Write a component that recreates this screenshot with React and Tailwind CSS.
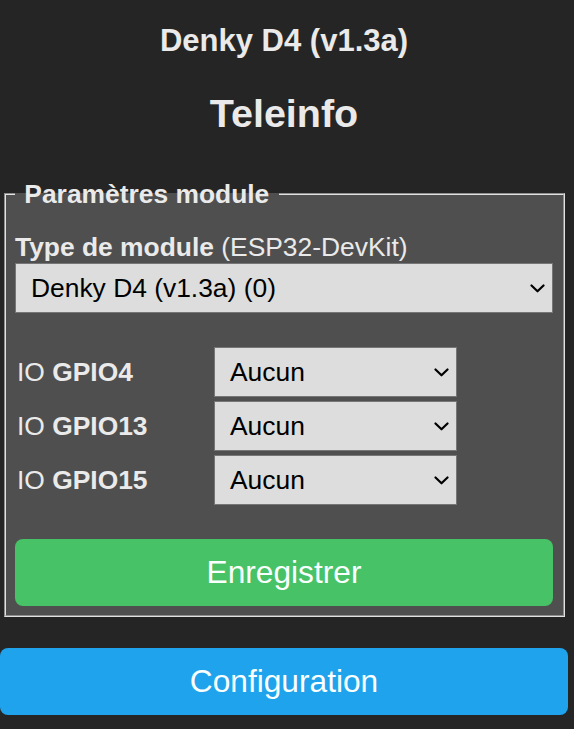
import React from "react";

function Chevron() {
  return (
    <svg width="15" height="9" viewBox="0 0 15 9" className="shrink-0">
      <polyline points="1.5,1.5 7.5,7.3 13.5,1.5" fill="none" stroke="#000" strokeWidth="2.2" strokeLinecap="round" strokeLinejoin="round" />
    </svg>
  );
}

function FakeSelect({ value, className = "" }) {
  return (
    <div className={"flex h-[50px] items-center justify-between border border-[#767676] bg-[#dddddd] pl-[15px] pr-[7px] text-[26.4px] leading-[30px] text-black " + className}>
      <span>{value}</span>
      <Chevron />
    </div>
  );
}

export default function App() {
  const gpios = ["GPIO4", "GPIO13", "GPIO15"];
  return (
    <div className="min-h-screen bg-[#252525] font-['Liberation_Sans',Arial,sans-serif] text-[26.4px] text-[#eaeaea]">
      <div className="w-[568px] pb-[14px]">
        <div className="pt-[23px] text-center">
          <h3 className="text-[31px] font-bold leading-[35px]">Denky D4 (v1.3a)</h3>
          <h2 className="mt-[33px] text-[39.5px] font-bold leading-[45px]">Teleinfo</h2>
        </div>

        <fieldset className="mt-[43px] ml-[4px] mr-[3px] border-2 border-[#e2e2e2] [border-style:groove] bg-[#4f4f4f] pl-[9px] pr-[10px] pb-[9px]">
          <legend className="px-[2px] font-bold leading-[30px]">{"\u00a0Paramètres module\u00a0"}</legend>
          <div className="mt-[23px] leading-[30px]">
            <b>Type de module</b> (ESP32-DevKit)
          </div>
          <FakeSelect value="Denky D4 (v1.3a) (0)" className="mt-[1px]" />

          <div className="mt-[34px] grid grid-cols-[199px_243px] gap-y-[4px]">
            {gpios.map((g) => (
              <React.Fragment key={g}>
                <div className="flex items-center pl-[2px] leading-[30px]">
                  IO&nbsp;<b>{g}</b>
                </div>
                <FakeSelect value="Aucun" />
              </React.Fragment>
            ))}
          </div>

          <button className="mt-[34px] flex h-[67px] w-full items-center justify-center rounded-[8px] bg-[#47c266] text-[31.7px] text-[#faffff]">
            Enregistrer
          </button>
        </fieldset>

        <button className="mt-[31px] flex h-[67px] w-[568px] items-center justify-center rounded-[8px] bg-[#1fa3ec] text-[31.7px] text-[#faffff]">
          Configuration
        </button>
      </div>
    </div>
  );
}
